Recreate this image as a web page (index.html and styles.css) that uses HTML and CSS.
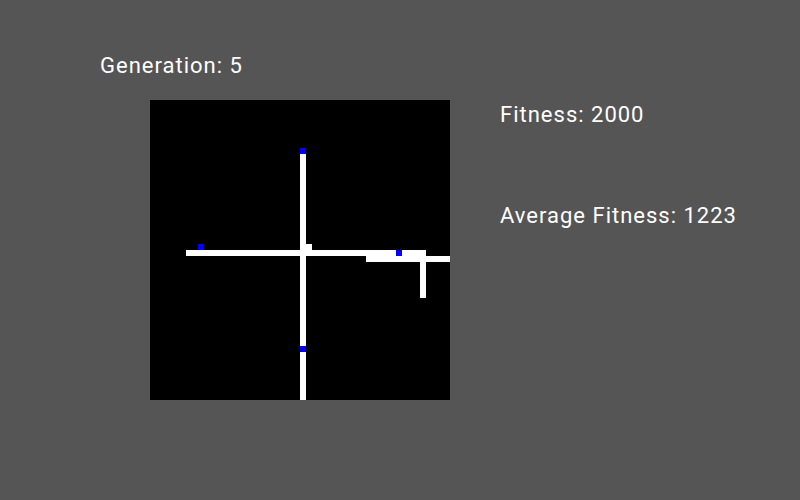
FILE: index.html
```html
<!DOCTYPE html>
<html lang="en">
<head>
    <meta charset="UTF-8">
    <title>Generation</title>
    <link rel="stylesheet" href="styles.css">
</head>
<body>
    <main class="screen">
        <section class="left">
            <div class="label gen">Generation: 5</div>
            <div class="board">
                <svg width="300" height="300" viewBox="0 0 300 300" shape-rendering="crispEdges">
                    <rect x="0" y="0" width="300" height="300" fill="#000"/>
                    <!-- snake body -->
                    <rect x="150" y="54" width="6" height="246" fill="#fff"/>
                    <rect x="36" y="150" width="240" height="6" fill="#fff"/>
                    <rect x="156" y="144" width="6" height="6" fill="#fff"/>
                    <rect x="216" y="156" width="84" height="6" fill="#fff"/>
                    <rect x="270" y="156" width="6" height="42" fill="#fff"/>
                    <!-- food -->
                    <rect x="150" y="48" width="6" height="6" fill="#0000ff"/>
                    <rect x="48" y="144" width="6" height="6" fill="#0000ff"/>
                    <rect x="246" y="150" width="6" height="6" fill="#0000ff"/>
                    <rect x="150" y="246" width="6" height="6" fill="#0000ff"/>
                </svg>
            </div>
        </section>
        <section class="stats">
            <div class="label fitness">Fitness: 2000</div>
            <div class="label average">Average Fitness: 1223</div>
        </section>
    </main>
</body>
</html>
```

FILE: styles.css
```css
html, body {
    margin: 0;
    height: 100%;
}
body {
    background-color: #555555;
    font-family: Roboto, "DejaVu Sans", sans-serif;
    color: #fff;
}
.screen {
    display: flex;
    padding-top: 54px;
}
.left {
    width: 450px;
}
.label {
    font-size: 22px;
    line-height: 24px;
    letter-spacing: 1px;
    white-space: nowrap;
}
.gen {
    margin-left: 100px;
}
.board {
    margin: 22px 0 0 150px;
    width: 300px;
    height: 300px;
}
.board svg {
    display: block;
}
.stats {
    padding-top: 49px;
    margin-left: 50px;
}
.average {
    margin-top: 77px;
}
```
